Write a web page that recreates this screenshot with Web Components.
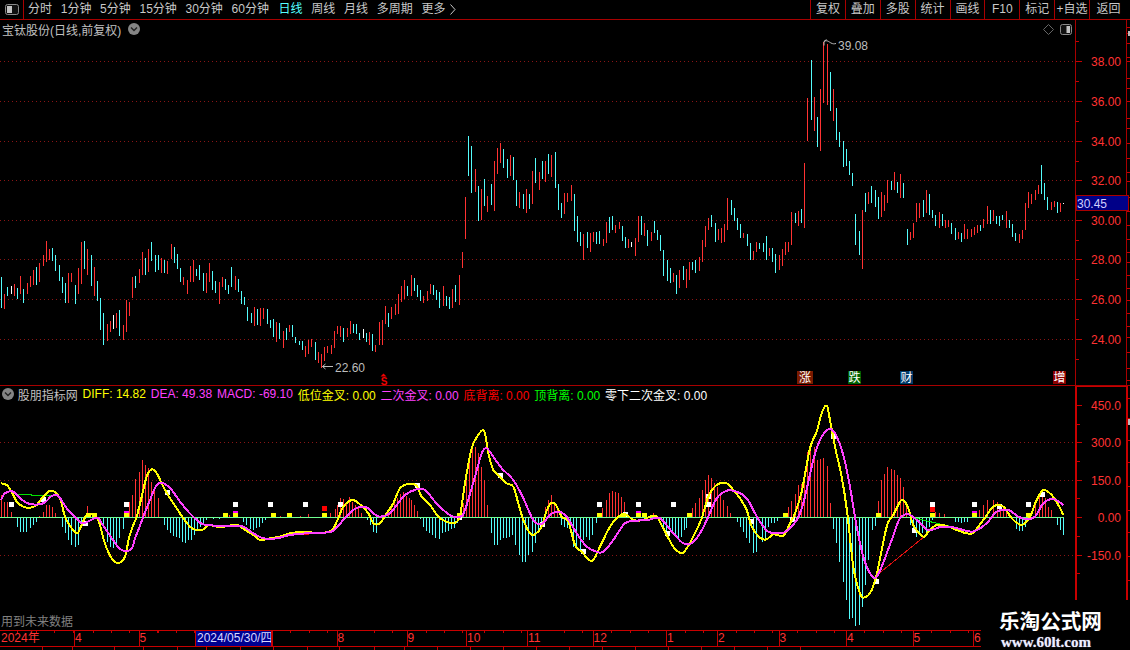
<!DOCTYPE html>
<html lang="zh"><head><meta charset="utf-8"><title>宝钛股份</title>
<style>
html,body{margin:0;padding:0;background:#000;overflow:hidden}
body{font:12px "Liberation Sans","Noto Sans CJK SC",sans-serif;color:#c8c8c8;width:1130px;height:650px}
tb-item.on{color:#55ffff}
tb-item.first{margin-left:4px}
tb-item.d1{margin-left:1px}
</style></head>
<body>
<stock-app>
  <top-bar>
    <tb-item class="first">分时</tb-item><tb-item>1分钟</tb-item><tb-item>5分钟</tb-item><tb-item>15分钟</tb-item><tb-item>30分钟</tb-item><tb-item>60分钟</tb-item>
    <tb-item class="on d1">日线</tb-item><tb-item>周线</tb-item><tb-item>月线</tb-item><tb-item>多周期</tb-item><tb-item>更多<more-chev></more-chev></tb-item>
    <tb-btn slot="right">复权</tb-btn><tb-btn slot="right">叠加</tb-btn><tb-btn slot="right">多股</tb-btn><tb-btn slot="right">统计</tb-btn><tb-btn slot="right">画线</tb-btn><tb-btn slot="right">F10</tb-btn><tb-btn slot="right">标记</tb-btn><tb-btn slot="right">+自选</tb-btn><tb-btn slot="right" class="last">返回</tb-btn>
  </top-bar>
  <price-panel></price-panel>
  <macd-panel></macd-panel>
  <date-axis></date-axis>
  <foot-tabs></foot-tabs>
  <water-mark></water-mark>
</stock-app>
<script>
const RED='#ff3232',CY='#54fcfc',GRID='#8a1515',AX='#a80000',AX2='#c80000';
const CHEV='<svg width="12" height="12" viewBox="0 0 12 12" style="display:block;flex:none"><circle cx="6" cy="6" r="6" fill="#858585"/><path d="M3 4.6 6 7.6 9 4.6" fill="none" stroke="#222" stroke-width="1.4"/></svg>';
const def=(n,c)=>customElements.define(n,c);
const shadow=(e,html)=>{e.attachShadow({mode:'open'}).innerHTML=html};

def('stock-app',class extends HTMLElement{constructor(){super();shadow(this,`<style>:host{display:flex;flex-direction:column;position:relative;width:1130px;height:650px;overflow:hidden;background:#000}</style><slot></slot>`)}});

def('top-bar',class extends HTMLElement{constructor(){super();shadow(this,`<style>
:host{display:flex;height:19px;border-bottom:1px solid ${AX};align-items:stretch;line-height:19px;flex:none}
.ic{width:23px;border-right:1px solid ${AX};display:flex;align-items:center;justify-content:center;flex:none}
.l{display:flex;gap:8.7px;flex:1}
.r{display:flex;width:320px;flex:none}
</style><div class="ic"><svg width="14" height="11" viewBox="0 0 14 11"><rect x=".5" y=".5" width="13" height="10" rx="2" fill="#111" stroke="#8a8a8a"/><rect x="2" y="2" width="5" height="7" fill="#c4c4c4"/></svg></div>
<div class="l"><slot></slot></div><div class="r"><slot name="right"></slot></div>`)}});

def('tb-item',class extends HTMLElement{constructor(){super();shadow(this,`<style>:host{display:flex;align-items:center;white-space:nowrap}</style><slot></slot>`)}});
def('more-chev',class extends HTMLElement{constructor(){super();shadow(this,`<style>:host{display:block;margin-left:5px}</style><svg width="6" height="11" viewBox="0 0 6 11" style="display:block"><path d="M.5 .5 5 5.5 .5 10.5" fill="none" stroke="#c8c8c8"/></svg>`)}});
def('tb-btn',class extends HTMLElement{constructor(){super();shadow(this,`<style>:host{display:block;width:34.9px;border-left:1px solid ${AX};box-sizing:border-box;text-align:center;white-space:nowrap}:host(.last){width:41px;padding-right:3px}</style><slot></slot>`)}});

/* ---- candles: colour, x*3, top*3, bottom*3 (relative to crop origin) ---- */
const SEG=[
[0,230,"c4,140,233 r13,192,237 c22,171,198 w33,168,192 r42,162,198 c52,174,207 r61,138,192 c70,177,219 r82,159,192 r91,138,171 r100,120,165 c109,111,165 r118,99,156 r130,75,108 r139,33,96 r148,57,90 c157,54,93 c166,75,123 c178,105,153 c187,141,189 c196,159,219 r205,129,219 r214,129,156 c226,165,222 r235,114,192 r244,36,162 c253,33,117 r262,57,135 c274,75,168 r283,111,198 c292,153,213 c301,204,300 c310,249,345 r322,282,333 r331,273,306 w340,255,297 r349,249,294 c358,240,318 r370,285,330 r379,210,306 r388,216,258 r397,141,204 c406,138,174 r418,117,159 r427,66,135 c436,84,135 r445,57,126 c454,36,93 c466,75,126 c475,75,120 r484,84,129 c493,90,129 r502,93,132 r514,42,87 c523,51,99 c532,72,117 c541,114,156 r550,141,165 r562,150,192 r571,108,156 r580,90,156 c589,117,138 c598,105,150 c610,129,183 r619,129,189 r628,99,156 c637,123,180 c646,153,189 r658,156,222 r667,141,171 c676,147,180 c685,165,192 c694,111,171 r706,138,180 c715,147,186"],
[240,230,"c4,183,222 c13,201,225 c22,231,273 c34,249,279 r43,231,288 c52,237,285 r61,234,288 r70,234,267 c82,237,282 c91,270,294 c100,267,321 r109,276,336 c118,279,327 r130,303,354 c139,294,330 r148,285,306 c157,285,321 c166,321,339 c178,333,345 c187,333,360 r196,348,381 r205,330,372 r214,327,351 c226,336,390 r235,366,399 r244,372,414 r253,351,393 r262,348,369 r274,345,372 r283,303,354 r292,288,312 r301,288,321 c310,294,336 r322,294,321 r331,273,312 c340,282,309 c349,282,312 c358,309,330 w370,297,324 c379,309,336 r388,306,345 c397,312,363 r406,345,366 r418,276,345 r427,270,345 r436,228,282 c445,249,291 r454,231,267 r466,222,255 r475,192,252 r484,168,216 r493,150,207 c502,168,198 r514,135,198 c523,144,183 c532,165,201 c541,180,213 r550,198,219 r562,183,213 r571,162,192 c580,165,195 c589,180,210 c598,186,234 r610,168,228 c619,198,228 c628,201,237 r637,177,234 c646,165,216 r658,135,225"],
[460,130,"r7,366,414 r16,201,327 c25,18,138 c34,48,189 r46,117,186 c55,168,273 r64,177,270 c73,147,228 r82,198,246 c94,162,225 r103,93,243 r112,54,132 r121,39,99 c130,57,114 c142,87,144 r151,75,138 c160,81,150 c169,150,228 r178,186,234 c190,192,237 r199,177,249 c208,192,237 r217,123,222 c226,84,159 r238,126,180 c247,93,147 r256,93,156 c265,72,132 r274,75,141 c286,66,174 c295,162,240 c304,219,264 r313,189,252 r322,189,216 r334,165,213 c343,192,303 c352,258,336 c361,306,348 r370,312,390 c382,306,354 r391,309,366 r400,306,336 c409,306,342 c418,303,342 r430,327,348 r439,276,339 c448,261,309 c457,258,300 r466,285,309 r478,276,297 c487,288,333 c496,321,354 r505,327,354 w514,336,351 r526,324,378 r535,258,336 c544,258,315 r553,279,318 c562,300,348 r574,306,333 c583,273,309 c592,300,330 c601,315,363 c610,360,438 c622,390,453 c631,414,459 r640,429,456 c649,435,492 r658,420,474 c670,408,450 r679,417,474 r688,396,450 c697,396,420 c706,390,429 r718,381,423"],
[700,30,"r7,630,696 r16,588,651 r25,564,600 c34,555,591 c46,579,636 r55,597,630 r64,594,639 r73,582,636 r82,504,600 c94,510,555 c103,534,573 c112,564,600 c121,582,624 r130,609,624 c142,612,648 c151,639,690 r160,663,690 r169,636,666 c178,639,657 c190,639,666 c199,618,690 r208,654,678 c217,654,696 c226,672,729 r238,675,720 r247,657,708 r256,636,675 r265,636,666 r274,546,645 c286,549,579 r295,543,588 c304,537,579 r313,399,594 r322,204,333 c334,90,270 r343,201,303 c352,261,351 r361,177,363 r370,36,219 r382,42,225 c391,126,243 r400,177,273 c409,234,330 c418,306,351 c430,333,411 c439,357,408 c448,393,435 c457,429,468 c466,552,645 c478,603,675 r487,540,717 c496,489,546 r505,486,522 c514,468,519 c526,480,531 c535,501,567 r544,486,561 r553,495,543 r562,450,519 c574,453,480 r583,426,480 c592,456,489"],
[900,130,"r1,132,204 c10,159,204 c22,297,345 r31,306,330 r40,279,324 r49,219,276 r58,219,264 c70,210,261 r79,180,249 c88,192,255 c97,240,264 c106,255,288 r118,246,294 c127,252,288 r136,270,294 r145,270,291 c154,279,312 c166,294,330 r175,306,327 c184,309,336 r193,282,327 r202,297,327 r214,297,321 r223,291,315 r232,285,309 c241,285,303 r250,267,294 r262,228,282 c271,240,282 r280,240,273 c289,258,282 c298,258,288 c307,255,270 r319,243,294 c328,270,294 c337,282,321 c346,309,333 r358,312,339 r367,300,327 r376,219,300 r385,186,234 r394,192,222 r406,180,210 r415,165,192 c424,105,192 c433,159,210 c442,201,240 r454,216,240 r463,213,231 c472,216,249 r481,219,246 w490,220,222"]
];
const COL={c:CY,r:RED,w:'#ffffff'};
function candles(){let o='';for(const[x0,y0,s]of SEG){for(const t of s.split(' ')){const k=t[0];const[a,b,c]=t.slice(1).split(',').map(Number);
 o+=`<rect x="${x0+Math.floor(a/3)}" y="${(y0+b/3).toFixed(0)}" width="1" height="${Math.max(1,((c-b)/3)).toFixed(0)}" fill="${COL[k]}"/>`}}return o}
const txt=(x,y,s,fill,extra='')=>`<text x="${x}" y="${y}" fill="${fill}" ${extra}>${s}</text>`;
const dot=(y,x2=1075)=>`<line x1="0" x2="${x2}" y1="${y+.5}" y2="${y+.5}" stroke="${GRID}" stroke-dasharray="1 3" shape-rendering="crispEdges"/>`;
const hl=(x1,x2,y,c)=>`<rect x="${x1}" y="${y}" width="${x2-x1}" height="1" fill="${c}"/>`;
const tag=(x,w,s,bg)=>`<rect x="${x}" y="371" width="${w}" height="13" fill="${bg}"/>`+txt(x+w/2,382,s,'#fff','text-anchor="middle"');
const SVGCSS=`svg{display:block;font:12px "Liberation Sans","Noto Sans CJK SC",sans-serif}`;

def('price-panel',class extends HTMLElement{constructor(){super();
 let g='';const ys=[61,101,141,180,220,259,299,339],lb=['38.00','36.00','34.00','32.00','30.00','28.00','26.00','24.00'];
 ys.forEach(y=>g+=dot(y));
 let ax=`<rect x="1075" y="20" width="1" height="365" fill="${AX}"/><rect x="1126" y="20" width="1" height="365" fill="${AX}"/>`;
 ys.forEach((y,i)=>{ax+=hl(1076,1082,y,AX2)+hl(1076,1079,y+20,AX2)+txt(1121,y+4.5,lb[i],RED,'text-anchor="end"')});
 ax+=hl(1076,1079,41,AX2);
 [27,33,43,57,61,78,88,101,118,128,143,158,172,181,197,211,225,239,252,262,275,288,300,313,326,337,352,368,380].forEach(y=>ax+=hl(1127,1130,y,AX2));
 ax+=`<rect x="1128" y="31" width="2" height="5" fill="#bbb"/>`;
 const price=`<rect x="1076.5" y="195.5" width="52" height="15" fill="#000088" stroke="${AX}"/>`+txt(1077,207.5,'30.45','#d0d0ff');
 const marks=`<path d="M322.5 366.5H333M322.5 366.5l3-2.5M322.5 366.5l3 2.5" stroke="#bdbdbd" fill="none"/>`+txt(335,372,'22.60','#bdbdbd')+
  `<path d="M824 41.5C827 39.5 829 42 831 43S834 44 836 43.5M824 41.5V45.5M824 41.5l2.5-2" stroke="#bdbdbd" fill="none"/>`+txt(838,50,'39.08','#bdbdbd')+
  `<path d="M383.5 373.5l3 3h-6z" fill="#f00000"/>`+txt(384,384.5,'S','#f00000','text-anchor="middle" font-weight="700" font-size="10"');
 const tags=tag(797,16,'涨','#7a1a00')+tag(848,13,'跌','#006000')+tag(900,13,'财','#003a6a')+tag(1053,13,'增','#8c0000');
 shadow(this,`<style>:host{display:grid;height:365px;border-bottom:1px solid ${AX};flex:none;overflow:hidden}
 ${SVGCSS} svg.c,.t{grid-area:1/1}
 .t{display:flex;align-items:center;height:18px;padding-left:2px;gap:7px;color:#c0c0c0;white-space:nowrap;align-self:start}
 .i{margin-left:auto;margin-right:58px;display:flex;gap:6px;align-items:center}</style>
 <svg class="c" width="1130" height="365" viewBox="0 20 1130 365">${g}<g shape-rendering="crispEdges">${candles()}${ax}</g>${price}${marks}${tags}</svg>
 <div class="t"><span>宝钛股份(日线,前复权)</span>${CHEV}<span class="i"><svg width="11" height="11" viewBox="0 0 11 11" style="display:block"><path d="M5.5 .5 10.5 5.5 5.5 10.5 .5 5.5z" fill="none" stroke="#666"/></svg><svg width="12" height="11" viewBox="0 0 12 11" style="display:block"><rect x=".5" y=".5" width="11" height="10" rx="2" fill="#111" stroke="#8a8a8a"/><rect x="6.5" y="2" width="3.5" height="7" fill="#c4c4c4"/></svg></span></div>`)}});

/* ---- MACD ---- */
const smooth=p=>{let d=`M${p[0][0]} ${p[0][1]}`;for(let i=0;i<p.length-1;i++){const a=p[i-1]||p[i],b=p[i],c=p[i+1],e=p[i+2]||c;
 d+=`C${(b[0]+(c[0]-a[0])/6).toFixed(1)} ${(b[1]+(c[1]-a[1])/6).toFixed(1)} ${(c[0]-(e[0]-b[0])/6).toFixed(1)} ${(c[1]-(e[1]-b[1])/6).toFixed(1)} ${c[0].toFixed(1)} ${c[1].toFixed(1)}`}return d};
const parse=(x0,s)=>s.trim().split(/\s+/).map(t=>{const[a,b]=t.split(',').map(Number);return[x0+a/3,370+b/3]});
const Y=[...parse(0,"3,340 20,345 35,365 50,395 70,410 90,413 110,405 125,385 145,365 160,363 180,385 195,440 215,475 232,490 245,465 260,435 280,435 295,450 310,505 320,535 335,565 354,579 375,560 387,504 400,465 410,440 425,380 440,320 455,298 470,310 490,350 510,385 530,415 550,445 570,470 590,480 610,478 625,465 650,470 670,470 700,465 715,465 735,480 760,495 780,510 810,505 840,500 870,490 910,485 960,490 985,485 1000,475 1015,445 1030,410 1058,390 1085,408 1105,430 1120,460"),
 ...parse(380,"0,460 20,430 40,400 60,355 85,342 110,347 125,380 150,405 175,440 200,455 225,458 240,435 255,340 275,235 295,195 310,180 318,205 325,250 340,300 360,320 380,340 400,350 415,400 430,450 450,490 465,493 485,470 497,430 512,400 528,405 545,440 565,455 585,525 605,545 625,568 640,570 660,530 690,470 715,440 740,435 760,450 790,450 810,440 830,440 850,475 880,530 905,550 920,535 945,490 965,445 985,380 1010,345 1040,340 1060,360 1080,385 1100,420 1115,470"),
 ...parse(760,"0,503 20,508 40,493 70,497 90,460 105,430 125,365 150,235 170,185 185,130 200,107 210,150 225,230 245,320 262,430 280,590 300,670 315,682 335,660 352,605 380,470 400,435 425,390 445,415 460,465 490,500 505,485 530,465 560,468 590,480 620,490 640,488 670,450 700,410 730,410 755,445 785,465 810,440 830,390 850,360 875,375 895,405 910,435")];
const M=[...parse(0,"3,390 15,370 40,365 60,385 90,402 130,400 155,378 175,378 200,415 230,445 250,460 290,443 305,460 325,490 339,510 360,537 381,543 396,535 405,505 415,480 430,440 450,390 470,345 490,340 515,360 540,395 565,425 590,450 610,463 650,467 700,467 730,470 760,490 790,505 830,505 870,495 920,490 970,488 1000,482 1030,450 1060,420 1085,410 1105,415 1120,430"),
 ...parse(380,"0,440 30,430 50,405 75,375 110,358 135,360 165,395 190,420 215,438 240,440 255,420 285,320 305,250 320,235 340,260 365,295 400,330 430,385 460,450 485,462 510,435 535,425 560,440 590,490 620,530 650,545 670,545 700,510 735,460 770,452 805,450 840,445 880,490 910,520 935,520 960,490 985,440 1010,385 1040,362 1070,365 1100,385 1125,430"),
 ...parse(760,"0,455 25,485 60,490 85,480 110,450 130,400 160,270 180,210 205,178 225,190 250,255 270,350 290,470 310,560 330,610 347,623 365,590 395,510 420,445 445,433 470,450 505,480 545,470 585,473 620,483 645,483 680,460 710,425 745,420 775,440 800,447 825,440 850,400 880,387 910,405")];
const H=[[0,"4,375 13,395 22,395 34,425 52,470 61,486 70,485 79,485 91,473 100,465 109,456 118,437 130,425 139,405 148,405 157,410 166,430 187,472 196,490 205,510 214,525 226,531 235,525 244,470 262,408 270,430 280,435 290,432 300,445 310,475 322,515 331,530 340,535 349,520 358,505 370,478 388,395 397,375 406,328 418,305 427,270 436,285 445,295 454,335 463,355 475,385 493,465 502,480 511,490 520,497 529,500 538,505 547,515 556,520 565,510 574,510 583,495 592,480 601,470 610,458 619,450 640,447 658,447 670,445 688,436 730,455 740,465 751,478 760,480 769,475 778,470 787,460 796,450 820,437 840,437 862,435 875,433 900,437 925,432 990,430 1005,418 1013,405 1022,385 1031,388 1040,395 1049,380 1058,395 1067,405 1076,415 1085,430 1103,450 1112,465 1121,485 1130,490"],
[380,"25,425 34,410 43,395 52,385 61,372 70,365 79,378 88,385 94,390 103,405 112,423 121,448 130,472 139,483 148,490 157,495 166,505 178,507 187,490 196,485 205,484 214,478 223,475 232,460 241,448 250,400 259,300 268,265 277,235 286,230 295,250 304,290 313,330 322,405 334,490 343,525 352,525 361,510 370,505 379,505 388,500 397,495 406,525 418,555 427,575 436,577 445,555 457,545 466,520 475,490 484,475 496,410 505,390 514,375 523,405 532,420 545,465 554,470 563,475 572,490 581,530 590,535 601,540 610,510 619,500 628,510 637,495 649,460 668,413 678,390 687,370 696,363 705,365 714,370 723,380 732,395 741,430 820,430 850,480 859,495 868,480 877,490 886,495 895,505 904,500 913,480 919,473 938,415 947,400 958,385 967,360 976,330 985,315 994,325 1003,340 1012,350 1021,370 1030,390 1041,408 1052,430 1062,445 1072,455 1081,470 1090,485 1099,505 1108,520 1120,550 1129,545"],
[760,"8,515 17,505 26,470 35,460 44,458 53,453 73,428 85,410 94,392 105,372 114,345 125,342 133,310 142,245 151,220 162,230 171,270 180,268 189,265 201,288 211,400 220,477 229,520 238,575 250,635 259,690 268,748 277,745 286,768 298,765 307,710 316,645 325,570 337,480 346,468 355,393 364,330 373,312 382,292 394,297 403,300 412,315 421,325 430,350 439,410 451,465 460,490 469,500 478,495 487,490 499,485 508,470 517,450 526,425 538,430 553,432 574,445 586,455 595,455 604,458 613,456 622,455 634,445 658,420 670,405 682,390 700,390 712,395 722,410 731,415 740,425 750,445 768,478 777,482 786,483 795,470 805,445 826,398 838,370 847,365 856,385 865,410 874,420 892,465 901,480 910,495"]];
function hist(){let o='';const B=517;for(const[x0,s]of H){for(const t of s.split(' ')){const[a,b]=t.split(',').map(Number);const x=x0+Math.floor(a/3),y=Math.round(370+b/3);
 o+= y<B?`<rect x="${x}" y="${y}" width="1" height="${B-y}" fill="${RED}"/>`:`<rect x="${x}" y="${B}" width="1" height="${y-B}" fill="${CY}"/>`}}return o}
const SQ=(x0,list,c,w=5,h=5)=>list.map(([a,b])=>`<rect x="${x0+Math.round(a/3)-2}" y="${Math.round(370+b/3)-2}" width="${w}" height="${h}" fill="${c}"/>`).join('');
function squares(){
 return SQ(0,[[34,403],[130,387],[379,403],[706,403],[811,403],[916,403],[1021,403],[502,365],[255,460]],'#fff')
 +SQ(380,[[658,403],[775,403],[880,403],[985,403],[112,345],[360,315],[608,543],[735,432],[862,488],[985,378],[1112,453],[237,441],[487,461]],'#fff')
 +SQ(760,[[517,403],[643,403],[805,403],[718,408],[347,632],[220,198],[95,447],[463,480],[845,372]],'#fff')
 +SQ(0,[[379,428],[706,428]],'#ff00ff')+SQ(380,[[775,428]],'#ff00ff')+SQ(760,[[643,428]],'#ff00ff')
 +SQ(0,[[973,415]],'#ff0000')+SQ(760,[[517,417]],'#ff0000')
 +SQ(0,[[379,434],[676,434],[706,434],[820,434],[868,434],[973,434],[265,434],[283,434]],'#ffff00',5,4)
 +SQ(380,[[658,434],[238,434],[775,434],[793,434],[928,434],[730,434]],'#ffff00',5,4)
 +SQ(760,[[76,434],[355,434],[517,434],[643,434],[805,434]],'#ffff00',5,4)}
def('macd-panel',class extends HTMLElement{constructor(){super();
 let g=dot(442)+dot(480)+dot(555);
 let ax=`<rect x="1075" y="386" width="2" height="214" fill="${AX2}"/><rect x="1125.5" y="386" width="2" height="214" fill="${AX2}"/><rect x="1077" y="386" width="49" height="1" fill="${AX2}"/>`;
 [[405,'450.0'],[442,'300.0'],[480,'150.0'],[517,'0.00'],[555,'-150.0']].forEach(([y,s])=>{ax+=hl(1077,1082,y,AX2)+txt(1121,y+4.5,s,RED,'text-anchor="end"')});
 [424,461,498,536,573].forEach(y=>ax+=hl(1077,1080,y,AX2));
 [398,418,440,462,486,510,532,556,580].forEach(y=>ax+=hl(1127.5,1130,y,AX2));
 ax+=`<rect x="1128" y="419" width="2" height="6" fill="#bbb"/>`;
 const thin=(p,c)=>`<polyline points="${p.map(q=>q.join(',')).join(' ')}" fill="none" stroke="${c}"/>`;
 const lines=thin(parse(0,"50,373 95,374 96,377 175,378"),'#00e000')+thin(parse(760,"450,440 510,455 575,470"),'#00e000')+thin(parse(760,"345,620 505,490"),'#e01010')+thin(parse(0,"880,495 960,490"),'#ff0000');
 shadow(this,`<style>:host{display:grid;height:244px;flex:none;overflow:hidden}${SVGCSS}
 svg.c,.t{grid-area:1/1}.t{display:flex;align-items:center;height:16px;padding-left:2px;gap:4.8px;white-space:nowrap;align-self:start}
 .n{color:#c0c0c0;margin-left:-1px}</style>
 <svg class="c" width="1130" height="244" viewBox="0 386 1130 244">${g}
 <g shape-rendering="crispEdges">${hist()}<rect x="0" y="517" width="1064" height="1" fill="#70ff90"/>${squares()}${lines}
 <path d="${smooth(Y)}" fill="none" stroke="#ffff00" stroke-width="2"/><path d="${smooth(M)}" fill="none" stroke="#ff40ff" stroke-width="2"/>${ax}</g>
 ${txt(1,626,'用到未来数据','#808080')}</svg>
 <div class="t">${CHEV}<span class="n">股朋指标网</span>
 <span style="color:#ffff00">DIFF: 14.82</span><span style="color:#ff40ff">DEA: 49.38</span><span style="color:#ff40ff">MACD: -69.10</span><span style="color:#ffff00">低位金叉: 0.00</span><span style="color:#ff40ff">二次金叉: 0.00</span><span style="color:#ff0000">底背离: 0.00</span><span style="color:#00ff00">顶背离: 0.00</span><span style="color:#fff">零下二次金叉: 0.00</span></div>`)}});

def('date-cell',class extends HTMLElement{constructor(){super();shadow(this,`<style>:host{display:block;box-sizing:border-box;border-left:1px solid ${AX2};color:${RED};line-height:15px;white-space:nowrap;overflow:hidden;
 background:repeating-linear-gradient(90deg,transparent 0 17.5px,${AX2} 17.5px 18.5px) 0 0/100% 2px no-repeat}
 :host(.hi){background:#000090;color:#d8d8ff;border-right:1px solid ${AX2};padding-left:1px}:host(.first){border-left:0;padding-left:1px}</style><slot></slot>`)}});
def('date-axis',class extends HTMLElement{constructor(){super();
 const C=[[74,'2024年','first'],[64.5,'4'],[56.5,'5'],[77,'2024/05/30/四','hi'],[64.5,''],[70,'8'],[59.5,'9'],[61,'10'],[65.5,'11'],[73.5,'12'],[51,'1'],[61.5,'2'],[67.5,'3'],[66.5,'4'],[60.5,'5'],[8,'6']];
 shadow(this,`<style>:host{display:flex;height:17px;box-sizing:border-box;border-top:1px solid ${AX2};border-bottom:1px solid ${AX2};flex:none}</style>`+
  C.map(([w,s,c])=>`<date-cell class="${c||''}" style="width:${w}px;flex:none">${s}</date-cell>`).join(''))}});
def('foot-tabs',class extends HTMLElement{constructor(){super();
 const W=[43,30,42,29,34,29,34,33,34,32,35,30,33,33,33,33,33,33,33,33,33,33,33,33];
 shadow(this,`<style>:host{display:flex;height:3px;flex:none;overflow:hidden}i{display:block;flex:none;border-right:1px solid ${AX2};box-sizing:border-box}</style>`+W.map(w=>`<i style="width:${w}px"></i>`).join(''))}});
def('water-mark',class extends HTMLElement{constructor(){super();shadow(this,`<style>
 :host{position:absolute;left:981px;top:600px;width:149px;height:50px;background:#000;box-sizing:border-box;padding:9px 0 0 17px;color:#fff;white-space:nowrap}
 .a{font:700 20.6px/23px "Noto Sans CJK SC",sans-serif;display:block;margin-left:1px}
 .b{font:700 15px/16px "Liberation Serif",serif;display:block;margin:2px 0 0 3px;color:#eef;text-shadow:0 0 1px #88a}
 </style><span class="a">乐淘公式网</span><span class="b">www.60lt.com</span>`)}});
</script>
</body></html>
